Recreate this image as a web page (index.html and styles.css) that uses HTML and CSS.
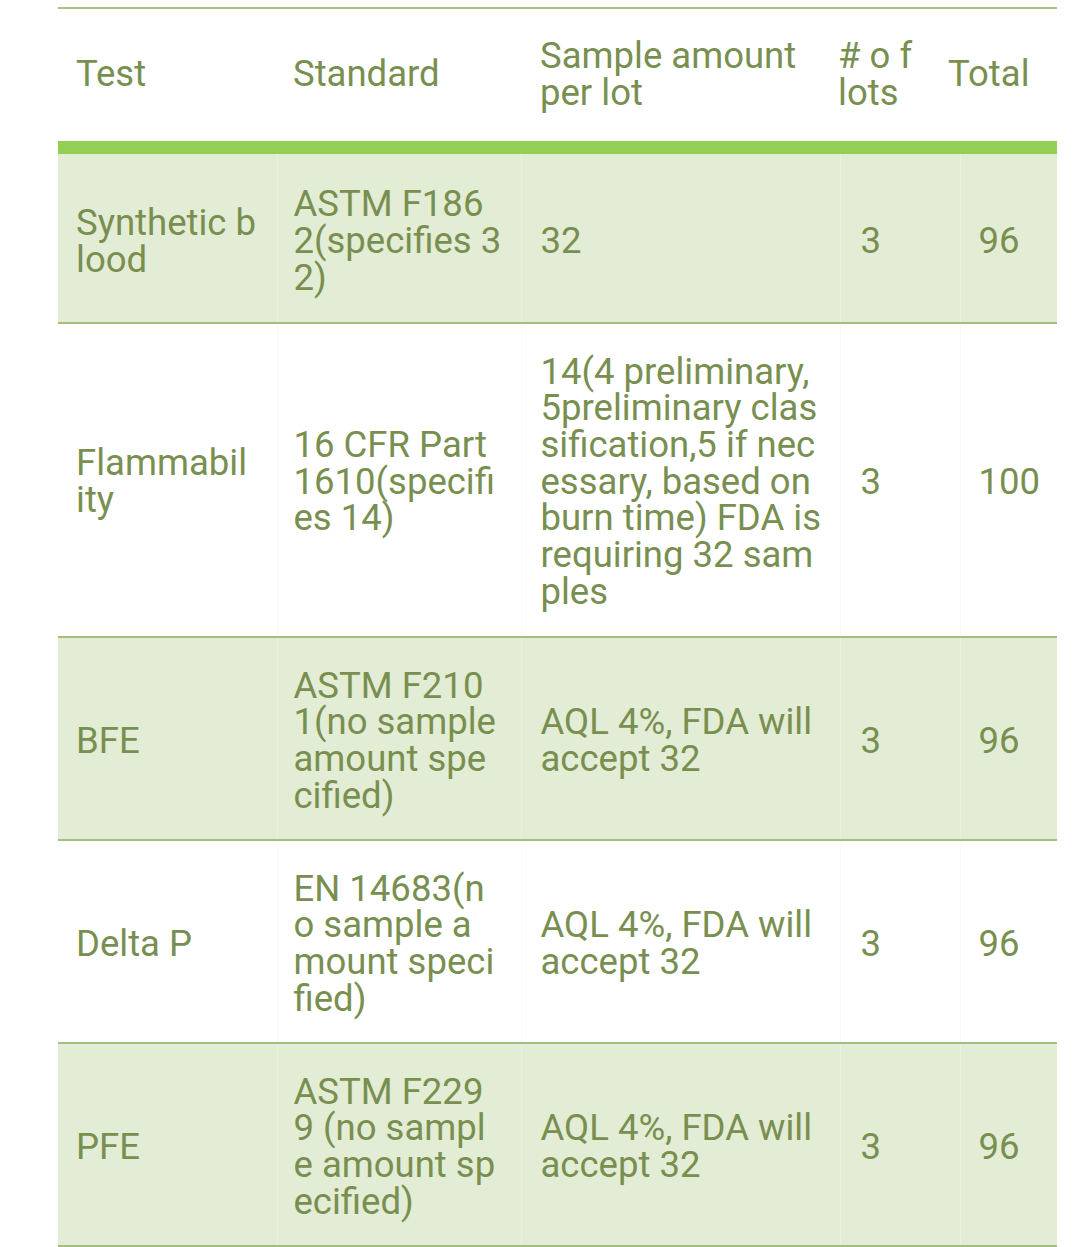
FILE: index.html
```html
<!DOCTYPE html>
<html>
<head>
<meta charset="utf-8">
<link rel="stylesheet" href="styles.css">
</head>
<body>
<table class="grid">
  <colgroup>
    <col class="c1"><col class="c2"><col class="c3"><col class="c4"><col class="c5">
  </colgroup>
  <thead>
    <tr class="head">
      <th class="p1">Test</th>
      <th class="p2">Standard</th>
      <th class="p3">Sample amount<br>per lot</th>
      <th class="h4"><span>#&nbsp;o&nbsp;f<br>lots</span></th>
      <th class="h5"><span>Total</span></th>
    </tr>
  </thead>
  <tbody>
    <tr class="alt one">
      <td class="p1">Synthetic b<br>lood</td>
      <td class="p2">ASTM F186<br>2(specifies 3<br>2)</td>
      <td class="p3">32</td>
      <td class="p4">3</td>
      <td class="p5">96</td>
    </tr>
    <tr class="seven">
      <td class="p1">Flammabil<br>ity</td>
      <td class="p2">16 CFR Part<br>1610(specifi<br>es 14)</td>
      <td class="p3">14(4 preliminary,<br>5preliminary clas<br>sification,5 if nec<br>essary, based on<br>burn time) FDA is<br>requiring 32 sam<br>ples</td>
      <td class="p4">3</td>
      <td class="p5">100</td>
    </tr>
    <tr class="alt four">
      <td class="p1">BFE</td>
      <td class="p2">ASTM F210<br>1(no sample<br>amount spe<br>cified)</td>
      <td class="p3">AQL 4%, FDA will<br>accept 32</td>
      <td class="p4">3</td>
      <td class="p5">96</td>
    </tr>
    <tr class="four">
      <td class="p1">Delta P</td>
      <td class="p2">EN 14683(n<br>o sample a<br>mount speci<br>fied)</td>
      <td class="p3">AQL 4%, FDA will<br>accept 32</td>
      <td class="p4">3</td>
      <td class="p5">96</td>
    </tr>
    <tr class="alt four">
      <td class="p1">PFE</td>
      <td class="p2">ASTM F229<br>9 (no sampl<br>e amount sp<br>ecified)</td>
      <td class="p3">AQL 4%, FDA will<br>accept 32</td>
      <td class="p4">3</td>
      <td class="p5">96</td>
    </tr>
  </tbody>
</table>
</body>
</html>
```
FILE: styles.css
```css
html, body {
  margin: 0;
  padding: 0;
  background: #ffffff;
}

body {
  padding-top: 7px;
  padding-left: 58px;
  font-family: Roboto, "Liberation Sans", sans-serif;
  color: #788f50;
}

.grid {
  border-collapse: collapse;
  table-layout: fixed;
  width: 999px;
  font-size: 36.5px;
  line-height: 36.7px;
}

.c1 { width: 219px; }
.c2 { width: 244px; }
.c3 { width: 319px; }
.c4 { width: 120px; }
.c5 { width: 97px; }

th, td {
  text-align: left;
  vertical-align: middle;
  white-space: nowrap;
  font-weight: 400;
  padding-top: 28px;
  padding-bottom: 28px;
  padding-right: 0;
  overflow: visible;
}

.head th {
  height: 139px;
  padding-top: 0;
  padding-bottom: 0;
  border-top: 2px solid #a9bf86;
  border-bottom: 13px solid #93cf55;
  box-sizing: border-box;
}

tbody tr {
  border-bottom: 2px solid #a6bd80;
}

tbody tr.alt {
  background: #e3ecd4;
}

tbody td + td {
  border-left: 1px solid #ebf1e2;
}

tbody tr:not(.alt) td + td {
  border-left: 1px solid #f8faf5;
}

.p1 { padding-left: 18px; }
.p2 { padding-left: 16px; }
.p3 { padding-left: 19px; }
.p4 { padding-left: 20px; }
.p5 { padding-left: 18px; }

.h4 { padding-left: 0; }
.h5 { padding-left: 0; }

.h4 span {
  display: block;
  margin-left: -2px;
}

.h5 span {
  display: block;
  margin-left: -12px;
}

tbody tr.one td {
  height: 112px;
  padding-top: 32px;
  padding-bottom: 24px;
}

tbody tr.seven td {
  height: 257px;
  padding-top: 30px;
  padding-bottom: 25px;
}

tbody tr.four td {
  height: 147px;
  padding-top: 30px;
  padding-bottom: 24px;
}
```
